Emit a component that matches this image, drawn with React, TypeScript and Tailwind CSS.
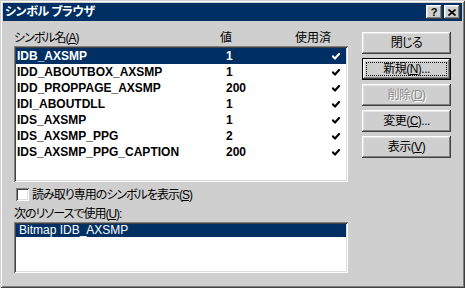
import React from 'react';

const rows = [
  { name: 'IDB_AXSMP', value: '1' },
  { name: 'IDD_ABOUTBOX_AXSMP', value: '1' },
  { name: 'IDD_PROPPAGE_AXSMP', value: '200' },
  { name: 'IDI_ABOUTDLL', value: '1' },
  { name: 'IDS_AXSMP', value: '1' },
  { name: 'IDS_AXSMP_PPG', value: '2' },
  { name: 'IDS_AXSMP_PPG_CAPTION', value: '200' },
];

const raised =
  'shadow-[inset_-1px_-1px_0_#404040,inset_1px_1px_0_#ffffff,inset_-2px_-2px_0_#808080,inset_2px_2px_0_#e4e4e4]';
const sunken =
  'shadow-[inset_1px_1px_0_#808080,inset_-1px_-1px_0_#ffffff,inset_2px_2px_0_#404040,inset_-2px_-2px_0_#dcdcdc]';

function Check({ white }: { white?: boolean }) {
  return (
    <svg width="8" height="7" viewBox="0 0 8 7" className="block">
      <path
        d="M1 3.5 L3 5.5 L7 1"
        fill="none"
        stroke={white ? '#ffffff' : '#000000'}
        strokeWidth="2"
        strokeLinecap="square"
      />
    </svg>
  );
}

function Button({
  children,
  isDefault,
  disabled,
}: {
  children: React.ReactNode;
  isDefault?: boolean;
  disabled?: boolean;
}) {
  return (
    <div
      className={`relative h-[22px] w-[89px] flex items-center justify-center bg-[#cfcfcf] ${
        isDefault ? 'border border-black' : ''
      }`}
    >
      <div className={`absolute inset-0 ${raised}`} />
      {isDefault && <div className="absolute inset-[3px] border border-dotted border-black" />}
      <span
        className={`relative text-[12px] leading-none tracking-[-0.5px] ${
          disabled ? 'text-[#8a8a8a] [text-shadow:1px_1px_0_#ffffff]' : 'text-black'
        }`}
      >
        {children}
      </span>
    </div>
  );
}

export default function App() {
  return (
    <div className="w-[465px] h-[288px] bg-[#cfcfcf] p-[3px] shadow-[inset_1px_1px_0_#cfcfcf,inset_-1px_-1px_0_#404040,inset_2px_2px_0_#ffffff,inset_-2px_-2px_0_#808080] font-['Liberation_Sans','Noto_Sans_CJK_JP',sans-serif] [font-feature-settings:'palt'] select-none overflow-hidden">
      {/* title bar */}
      <div className="h-[18px] bg-[#003063] flex items-center pl-[2px] pr-[2px]">
        <span className="text-white font-bold text-[12px] leading-none tracking-[-0.5px]">シンボル ブラウザ</span>
        <div className="ml-auto flex gap-[2px]">
          <div className={`relative w-[16px] h-[14px] bg-[#cfcfcf] flex items-center justify-center ${raised}`}>
            <span className="font-bold text-[11px] leading-none text-black font-['Liberation_Sans',sans-serif]">?</span>
          </div>
          <div className={`relative w-[16px] h-[14px] bg-[#cfcfcf] flex items-center justify-center ${raised}`}>
            <svg width="8" height="7" viewBox="0 0 8 7">
              <path d="M0.5 0.5 L7.5 6.5 M7.5 0.5 L0.5 6.5" stroke="#000" strokeWidth="1.6" />
            </svg>
          </div>
        </div>
      </div>

      {/* body */}
      <div className="flex pl-[11px]">
        <div className="w-[334px] pt-[10px]">
          <div className="relative h-[15px] text-[12px] leading-[15px] text-black">
            <span className="tracking-[-1px]">
              シンボル名(<span className="underline">A</span>)
            </span>
            <span className="absolute left-[206px] top-0">値</span>
            <span className="absolute left-[281px] top-0">使用済</span>
          </div>
          <div className={`h-[136px] bg-white p-[2px] ${sunken}`}>
            {rows.map((r, i) => (
              <div
                key={r.name}
                className={`flex items-center h-[16px] text-[12px] font-bold pl-[1px] ${
                  i === 0 ? 'bg-[#003063] text-white' : 'text-black'
                }`}
              >
                <span className="w-[209px]">{r.name}</span>
                <span className="w-[106px]">{r.value}</span>
                <Check white={i === 0} />
              </div>
            ))}
          </div>
          <div className="mt-[6px] flex items-center h-[13px]">
            <div className={`w-[13px] h-[13px] ml-[2px] bg-white ${sunken}`} />
            <span className="ml-[3px] text-[12px] leading-none text-black tracking-[-1px]">
              読み取り専用のシンボルを表示(<span className="underline">S</span>)
            </span>
          </div>
          <div className="mt-[6px] h-[15px] text-[12px] leading-[15px] text-black tracking-[-1px]">
            次のリソースで使用(<span className="underline">U</span>):
          </div>
          <div className={`h-[51px] bg-white p-[2px] ${sunken}`}>
            <div className="h-[13px] bg-[#003063] text-white text-[12px] leading-[13px] pl-[3px]">
              Bitmap IDB_AXSMP
            </div>
          </div>
        </div>

        <div className="ml-[14px] pt-[11px] flex flex-col gap-[4px]">
          <Button>閉じる</Button>
          <Button isDefault>
            新規(<span className="underline">N</span>)...
          </Button>
          <Button disabled>
            削除(<span className="underline">D</span>)
          </Button>
          <Button>
            変更(<span className="underline">C</span>)...
          </Button>
          <Button>
            表示(<span className="underline">V</span>)
          </Button>
        </div>
      </div>
    </div>
  );
}
